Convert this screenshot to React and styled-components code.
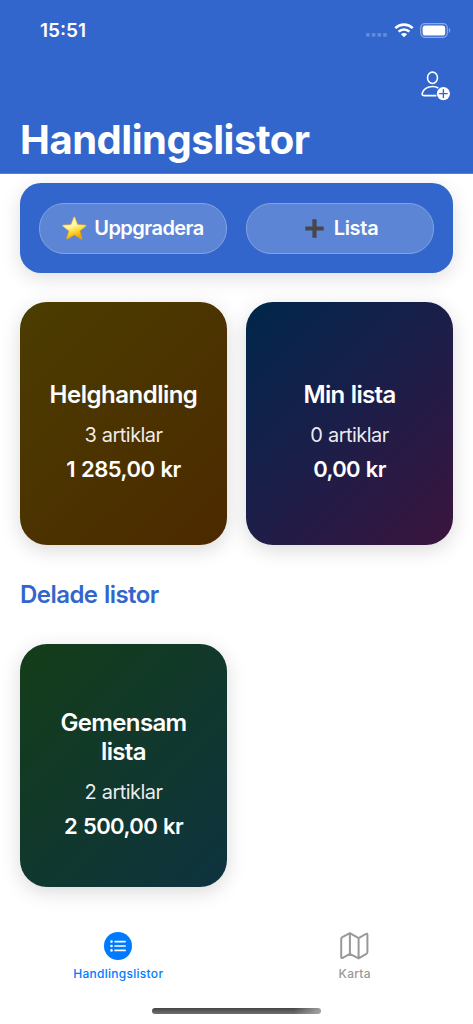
import React from 'react'
import styled, { createGlobalStyle } from 'styled-components'

const GlobalStyle = createGlobalStyle`
	*,
	*::before,
	*::after {
		box-sizing: border-box;
	}

	body {
		margin: 0;
		background: #fff;
		font-family: Inter, 'Liberation Sans', sans-serif;
		-webkit-font-smoothing: antialiased;
	}

	h1,
	h2,
	h3,
	p {
		margin: 0;
	}

	button {
		font-family: inherit;
	}
`

const ownLists = [
	{
		name: 'Helghandling',
		items: 3,
		total: '1 285,00 kr',
		from: '#4b3d00',
		to: '#4c2900',
		nameSpacing: -0.5,
		totalSpacing: -0.5,
	},
	{
		name: 'Min lista',
		items: 0,
		total: '0,00 kr',
		from: '#00264b',
		middle: '#1c1e49',
		to: '#3b143d',
		nameSpacing: -0.7,
		totalSpacing: -0.65,
	},
]

const sharedLists = [
	{
		name: 'Gemensam lista',
		items: 2,
		total: '2 500,00 kr',
		from: '#143d18',
		to: '#0e3340',
		nameSpacing: -0.65,
		totalSpacing: -0.6,
	},
]

const WifiIcon = () => (
	<svg width="20" height="15" viewBox="0 0 20 15" fill="none" stroke="#fff">
		<path d="M1.3 5.1C6.2.5 13.8.5 18.7 5.1" strokeWidth="2.6" />
		<path d="M4.6 8.6c3.1-2.9 7.7-2.9 10.8 0" strokeWidth="2.5" />
		<path d="M6.9 11.2c1.8-1.6 4.4-1.6 6.2 0L10 14.3z" fill="#fff" stroke="none" />
	</svg>
)

const BatteryIcon = () => (
	<svg width="31" height="15" viewBox="0 0 31 15">
		<rect x=".7" y=".7" width="26.6" height="13.6" rx="4.2" fill="none" stroke="#8eabe2" strokeWidth="1.2" />
		<rect x="2.6" y="2.4" width="22.6" height="10.2" rx="2.6" fill="#fff" />
		<path d="M28.9 5.1c1.8.6 1.8 4.2 0 4.8z" fill="#8eabe2" />
	</svg>
)

const SignalIcon = () => (
	<svg width="21" height="4" viewBox="0 0 21 4" fill="#6489d8">
		<rect width="3.8" height="3.8" rx="1.1" />
		<rect x="5.7" width="3.8" height="3.8" rx="1.1" />
		<rect x="11.4" width="3.8" height="3.8" rx="1.1" />
		<rect x="17.1" width="3.8" height="3.8" rx="1.1" />
	</svg>
)

const AddPersonIcon = () => (
	<svg width="30" height="30" viewBox="0 0 30 30" fill="none" stroke="#fff" strokeWidth="1.6">
		<ellipse cx="11.5" cy="6.8" rx="5" ry="5.7" />
		<path d="M15.4 24.6H3c-1.7 0-2.1-1-1.7-2.5.9-3.8 5-6.6 10.2-6.6 2.4 0 4.2.5 5.8 1.5" />
		<circle cx="22.4" cy="22.6" r="6.6" fill="#fff" stroke="none" />
		<path d="M22.4 18.8v7.6M18.6 22.6h7.6" stroke="#3266cc" strokeWidth="1.4" strokeLinecap="round" />
	</svg>
)

const StarIcon = () => (
	<svg width="25" height="24" viewBox="0 0 25 24">
		<defs>
			<linearGradient id="star" x1="0" y1="0" x2=".35" y2="1">
				<stop offset="0" stopColor="#fff3a0" />
				<stop offset=".5" stopColor="#fff6a9" />
				<stop offset=".75" stopColor="#ffd52d" />
				<stop offset="1" stopColor="#f0a50d" />
			</linearGradient>
		</defs>
		<path
			d="M12.3.8c.4 0 .7.5.9 1.1l2.5 6.7 7.4.3c1.3.1 1.5.8.6 1.5L18 15l2 7c.3 1.1-.3 1.5-1.2.9l-6.5-4-6.4 4c-.9.6-1.6.1-1.2-.9l2.1-7L1 10.4C.1 9.7.3 9 1.5 8.9l7.4-.3 2.5-6.7c.2-.6.5-1.1.9-1.1z"
			fill="url(#star)"
			stroke="#d99c20"
			strokeWidth=".6"
		/>
	</svg>
)

const PlusIcon = () => (
	<svg width="19" height="19" viewBox="0 0 19 19">
		<path d="M7.4.3h4.2v7.1h7.1v4.2h-7.1v7.1H7.4v-7.1H.3V7.4h7.1z" fill="#474747" />
	</svg>
)

const ListIcon = () => (
	<svg width="28" height="28" viewBox="0 0 28 28">
		<circle cx="14" cy="14" r="14" fill="#007aff" />
		<g stroke="#fff" strokeLinecap="round">
			<path d="M11.1 9.6h10M11.1 14h10M11.1 18.4h10" strokeWidth="1.7" />
			<path d="M7.5 9.6h.01M7.5 14h.01M7.5 18.4h.01" strokeWidth="2.6" />
		</g>
	</svg>
)

const MapIcon = () => (
	<svg
		width="30"
		height="28"
		viewBox="0.8 0 30 28"
		fill="none"
		stroke="#999"
		strokeWidth="2"
		strokeLinejoin="round"
	>
		<path d="M2 7.2c0-1 .3-1.5 1.1-2L10.7 1.2l8.7 5 7.2-4.2c1-.6 1.6-.3 1.6.8v17.3c0 .9-.3 1.4-1 1.8l-7.8 4.5-8.7-4.6-7.2 4c-1 .6-1.5.2-1.5-.8zM10.7 1.2v20.6M19.4 6.2v20.2" />
	</svg>
)

const ListCard = ({ list }) => (
	<Card $from={list.from} $middle={list.middle} $to={list.to}>
		<CardName $spacing={list.nameSpacing}>{list.name}</CardName>
		<CardItems>{list.items} artiklar</CardItems>
		<CardTotal $spacing={list.totalSpacing}>{list.total}</CardTotal>
	</Card>
)

const App = () => (
	<Screen>
		<GlobalStyle />
		<Header>
			<StatusBar>
				<Clock>15:51</Clock>
				<StatusIcons>
					<SignalIcon />
					<WifiIcon />
					<BatteryIcon />
				</StatusIcons>
			</StatusBar>
			<Toolbar>
				<IconButton aria-label="Bjud in">
					<AddPersonIcon />
				</IconButton>
			</Toolbar>
			<Title>Handlingslistor</Title>
		</Header>
		<Content>
			<Actions>
				<ActionButton $gap={7} $spacing={-0.55}>
					<StarIcon />
					Uppgradera
				</ActionButton>
				<ActionButton $gap={10} $spacing={-0.3} $indent={3}>
					<PlusIcon />
					Lista
				</ActionButton>
			</Actions>
			<Grid>
				{ownLists.map((list) => (
					<ListCard key={list.name} list={list} />
				))}
			</Grid>
			<SectionTitle>Delade listor</SectionTitle>
			<Grid>
				{sharedLists.map((list) => (
					<ListCard key={list.name} list={list} />
				))}
			</Grid>
		</Content>
		<TabBar>
			<Tab $active>
				<ListIcon />
				Handlingslistor
			</Tab>
			<Tab>
				<MapIcon />
				Karta
			</Tab>
		</TabBar>
		<HomeIndicator />
	</Screen>
)

export default App

const Screen = styled.div`
	width: 100%;
	height: 1024px;
	display: flex;
	flex-direction: column;
	overflow: hidden;
	background: #fff;
`

const Header = styled.header`
	height: 174px;
	flex-shrink: 0;
	background: #3266cc;
	border-bottom: 1px solid #5a80c8;
	color: #fff;
`

const StatusBar = styled.div`
	height: 60px;
	display: flex;
	align-items: center;
	justify-content: space-between;
	padding: 0 22px 0 40px;
`

const Clock = styled.span`
	font-size: 19px;
	font-weight: 600;
	line-height: 24px;
	padding-top: 2px;
`

const StatusIcons = styled.div`
	display: flex;
	align-items: center;
	gap: 6.5px;

	svg:first-child {
		margin-top: 10px;
	}
`

const Toolbar = styled.div`
	height: 50px;
	display: flex;
	align-items: center;
	justify-content: flex-end;
	padding: 2px 22px 0 0;
`

const IconButton = styled.button`
	display: flex;
	padding: 0;
	border: 0;
	background: none;
`

const Title = styled.h1`
	padding: 5px 0 0 20px;
	font-size: 40px;
	font-weight: 700;
	line-height: 50px;
	letter-spacing: -0.47px;
`

const Content = styled.main`
	flex: 1;
	padding: 9px 20px 0;
`

const Actions = styled.div`
	height: 90px;
	display: grid;
	grid-template-columns: 1fr 1fr;
	gap: 19px;
	padding: 20px 19px 19.5px;
	margin-bottom: 29px;
	border-radius: 21px;
	background: #3266cc;
	box-shadow: 0 5px 20px rgba(0, 0, 0, 0.13);
`

const ActionButton = styled.button`
	display: flex;
	align-items: center;
	justify-content: center;
	gap: ${({ $gap }) => $gap}px;
	padding: 0 0 0 ${({ $indent = 0 }) => $indent}px;
	border: 1px solid #83a2df;
	border-radius: 25px;
	background: #5c85d6;
	color: #fff;
	font-size: 20px;
	font-weight: 600;
	letter-spacing: ${({ $spacing }) => $spacing}px;
`

const Grid = styled.div`
	display: grid;
	grid-template-columns: 1fr 1fr;
	gap: 19px;
`

const Card = styled.article`
	height: 243px;
	display: flex;
	flex-direction: column;
	align-items: center;
	justify-content: center;
	padding: 17.5px 24px 0;
	border-radius: 27px;
	background: linear-gradient(
		135deg,
		${({ $from, $middle, $to }) => [$from, $middle, $to].filter(Boolean).join(', ')}
	);
	box-shadow: 0 5px 20px rgba(0, 0, 0, 0.15);
	color: #fff;
	text-align: center;
`

const CardName = styled.h2`
	font-size: 24px;
	font-weight: 600;
	line-height: 28.5px;
	letter-spacing: ${({ $spacing }) => $spacing}px;
	word-spacing: 1px;
`

const CardItems = styled.p`
	padding-top: 13.5px;
	font-size: 20px;
	line-height: 24px;
	letter-spacing: -0.55px;
	word-spacing: 0.5px;
	color: rgba(255, 255, 255, 0.93);
`

const CardTotal = styled.p`
	padding-top: 9px;
	font-size: 22px;
	font-weight: 600;
	line-height: 27px;
	letter-spacing: ${({ $spacing }) => $spacing}px;
	word-spacing: 1px;
`

const SectionTitle = styled.h3`
	padding: 34px 0;
	font-size: 24px;
	font-weight: 600;
	line-height: 31px;
	letter-spacing: -0.55px;
	word-spacing: 1px;
	color: #3266cc;
`

const TabBar = styled.nav`
	height: 76px;
	flex-shrink: 0;
	display: grid;
	grid-template-columns: 1fr 1fr;
`

const Tab = styled.a`
	display: flex;
	flex-direction: column;
	align-items: center;
	gap: 6px;
	font-size: 12px;
	font-weight: 500;
	line-height: 16px;
	letter-spacing: 0.28px;
	color: ${({ $active }) => ($active ? '#007aff' : '#999')};
`

const HomeIndicator = styled.div`
	width: 169px;
	height: 6px;
	flex-shrink: 0;
	align-self: center;
	margin-bottom: 10px;
	border-radius: 3px;
	background:
		linear-gradient(90deg, transparent 84%, rgba(180, 180, 180, 0.8)),
		linear-gradient(180deg, #444, #717171);
`
